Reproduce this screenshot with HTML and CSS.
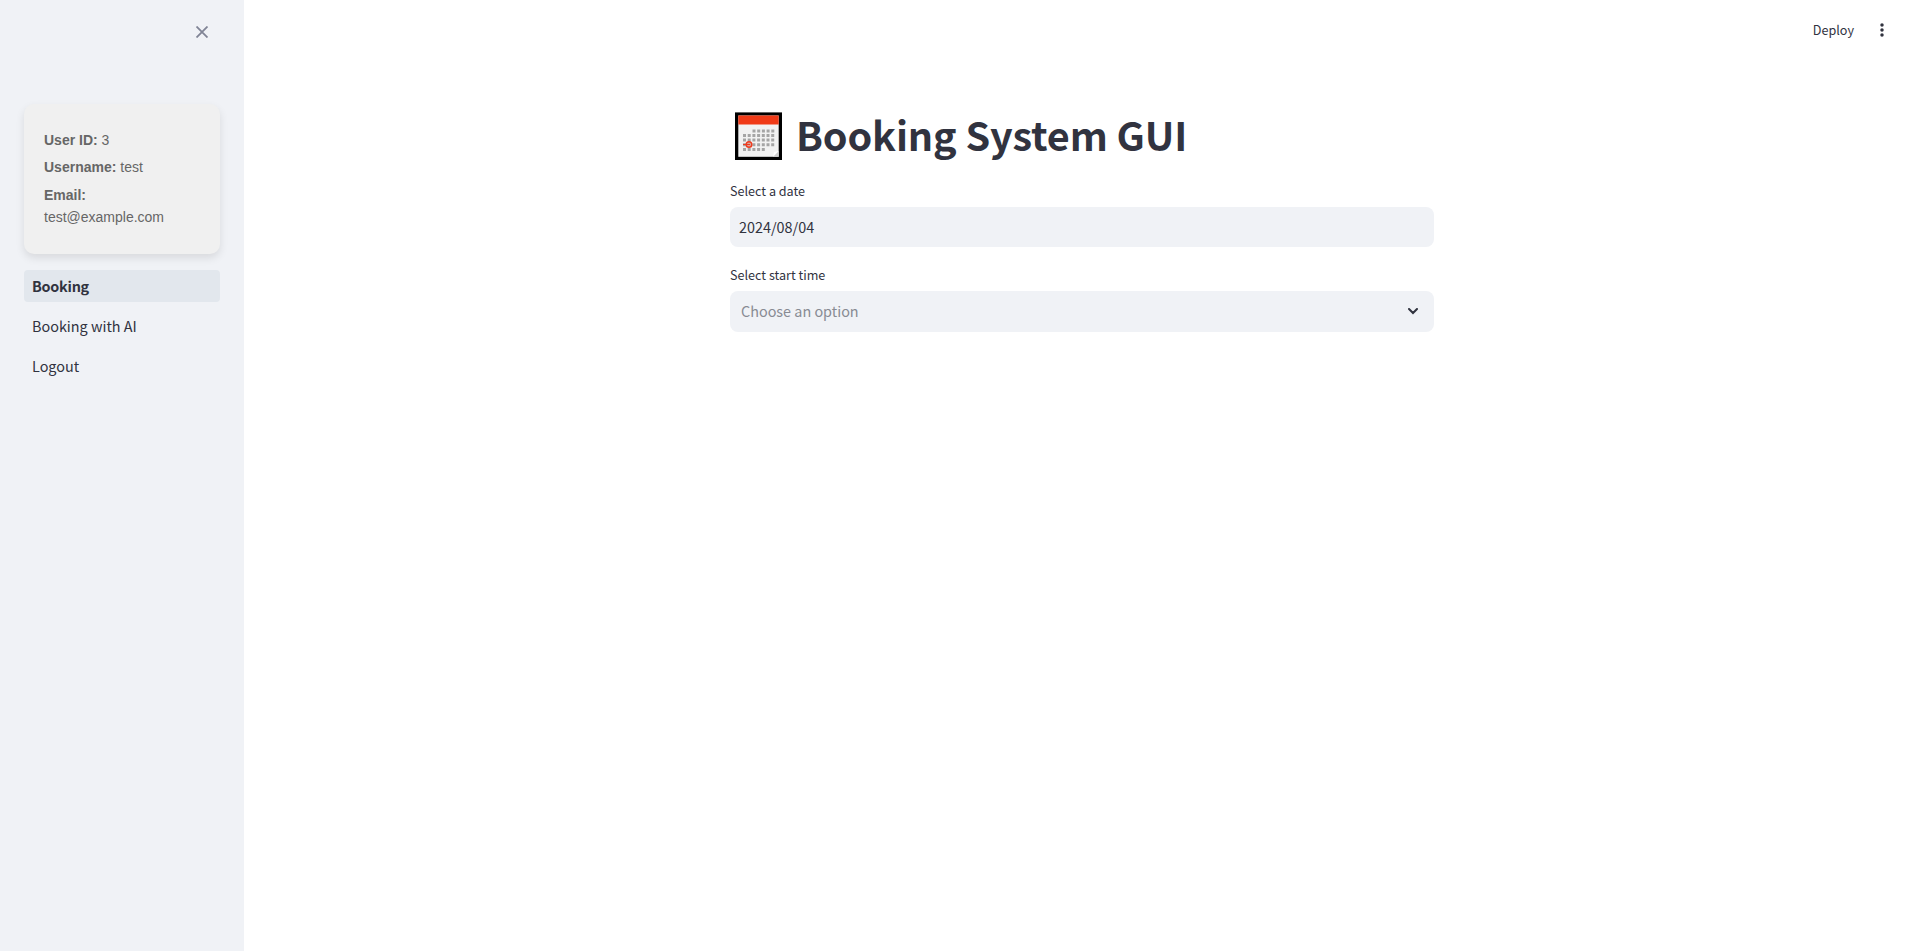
FILE: index.html
```html
<!DOCTYPE html>
<html lang="en">
<head>
<meta charset="utf-8">
<title>Booking System GUI</title>
<link rel="stylesheet" href="styles.css">
</head>
<body>
<div class="app">
  <aside class="sidebar">
    <div class="sidebar-head">
      <svg class="close" viewBox="0 0 12 12" width="12" height="12"><path d="M.5 .5L11.5 11.5M11.5 .5L.5 11.5"/></svg>
    </div>
    <section class="user-card">
      <p><strong>User ID:</strong> 3</p>
      <p><strong>Username:</strong> test</p>
      <p><strong>Email:</strong> test@example.com</p>
    </section>
    <nav class="nav">
      <a class="nav-item active">Booking</a>
      <a class="nav-item">Booking with AI</a>
      <a class="nav-item">Logout</a>
    </nav>
  </aside>
  <div class="page">
    <header class="toolbar">
      <span class="deploy">Deploy</span>
      <svg class="dots" viewBox="0 0 4 14" width="4" height="14"><circle cx="2" cy="2" r="1.75"/><circle cx="2" cy="7" r="1.75"/><circle cx="2" cy="12" r="1.75"/></svg>
    </header>
    <main class="content">
      <h1 class="title">
        <svg class="calendar" viewBox="0 0 47 48" width="47" height="48">
          <rect y=".4" width="47" height="47.6" fill="#000"/>
          <rect x="3.3" y="3.5" width="40.4" height="41.3" fill="#f2f2f2"/>
          <rect x="3.3" y="3.5" width="40.4" height="9" fill="#f03a17"/>
          <g stroke="#a5a5a5" stroke-width="3" stroke-dasharray="3 1.7">
            <path d="M17.5 19H39.3M8 23.5H39.3M8 28H39.3M8 32.7H39.3M8 37.5H30"/>
          </g>
          <circle cx="14" cy="32.5" r="2.8" fill="#d9a79f" stroke="#ef3d20" stroke-width="1.4"/>
          <path d="M8 32.5H15" stroke="#ef3d20" stroke-width="1"/>
          <path d="M38 44.8L43.7 39V44.8Z" fill="#cfcfcf"/><path d="M38 44.8L39 40L43.7 39Z" fill="#fff"/>
        </svg>
        <span>Booking System GUI</span>
      </h1>
      <label class="label">Select a date</label>
      <div class="field date">2024/08/04</div>
      <label class="label">Select start time</label>
      <div class="field select"><span>Choose an option</span>
        <svg class="chevron" viewBox="0 0 10 7" width="10" height="7"><path d="M1 1L5 5L9 1"/></svg>
      </div>
    </main>
  </div>
</div>
</body>
</html>
```
FILE: styles.css
```css
* { box-sizing: border-box; }
body { margin: 0; background: #fff; color: #31333f; font-family: "Noto Sans CJK SC", sans-serif; font-size: 14.4px; }
.app { display: flex; height: 951px; overflow: hidden; }
.sidebar { width: 244px; flex: none; background: #f0f2f6; padding: 0 24px; }
.sidebar-head { height: 104px; display: flex; justify-content: flex-end; padding: 26px 12px 0 0; }
.close { fill: none; stroke: #808495; stroke-width: 1.8; }
.user-card { height: 150px; padding: 20px; border-radius: 10px; background: #f0f0f0; box-shadow: 0 4px 8px rgba(0,0,0,.1); color: #666; font: 14px/22.4px "Liberation Sans", sans-serif; display: flow-root; }
.user-card p { margin: 5px 0; }
.nav { margin-top: 16px; display: flex; flex-direction: column; gap: 8px; }
.nav-item { height: 32px; line-height: 32px; padding: 0 8px; border-radius: 4px; }
.nav-item.active { background: #e2e7ed; font-weight: 600; letter-spacing: -.25px; }
.page { flex: 1; }
.toolbar { height: 60px; display: flex; align-items: center; justify-content: flex-end; gap: 26px; padding-right: 36px; font-size: 12.6px; }
.deploy { padding-bottom: 2px; }
.dots { fill: #31333f; }
.content { width: 704px; margin: 36px auto 0; }
.title { height: 84px; margin: 0; padding-left: 5px; display: flex; align-items: flex-start; gap: 14px; font-size: 39.6px; line-height: 52px; font-weight: 700; letter-spacing: -.13px; white-space: nowrap; }
.calendar { margin-top: 16px; flex: none; }
.title span { margin-top: 12px; }
.label { display: block; height: 27px; line-height: 21px; font-size: 12.6px; }
.field { height: 40px; line-height: 40px; margin-bottom: 17px; border-radius: 8px; background: #f0f2f6; padding: 0 9px; }
.select { height: 41px; line-height: 38px; display: flex; align-items: center; justify-content: space-between; padding: 0 16px 0 11px; color: #888b93; }
.select span { padding-bottom: 2px; }
.chevron { fill: none; stroke: #31333f; stroke-width: 2; stroke-linecap: round; }
```
